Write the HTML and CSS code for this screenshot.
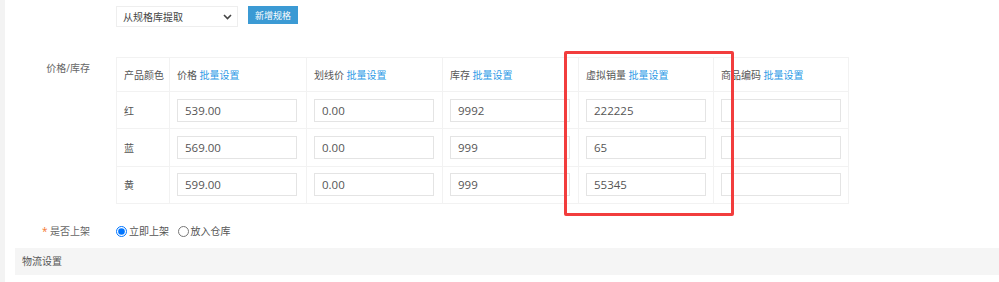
FILE: index.html
```html
<!DOCTYPE html>
<html lang="zh-CN">
<head>
  <meta charset="UTF-8">
  <title>商品规格</title>
  <link rel="stylesheet" href="styles.css">
</head>
<body>

<div class="page">
  <div class="form-row spec-row">
    <div class="label"></div>
    <div class="field">
      <div class="select-wrap">
        <select class="select">
          <option>从规格库提取</option>
        </select>
        <svg class="chevron" width="9" height="6" viewBox="0 0 9 6"><path d="M1 1l3.5 3.5L8 1" fill="none" stroke="#444" stroke-width="1.6"/></svg>
      </div>
      <button class="btn">新增规格</button>
    </div>
  </div>

  <div class="form-row stock-row">
    <div class="label">价格/库存</div>
    <div class="field table-wrap">
      <table class="sku">
        <colgroup>
          <col style="width:53px">
          <col style="width:137px">
          <col style="width:136px">
          <col style="width:136px">
          <col style="width:135px">
          <col style="width:135px">
        </colgroup>
        <tr class="head">
          <th>产品颜色</th>
          <th>价格 <a href="#">批量设置</a></th>
          <th>划线价 <a href="#">批量设置</a></th>
          <th>库存 <a href="#">批量设置</a></th>
          <th>虚拟销量 <a href="#">批量设置</a></th>
          <th>商品编码 <a href="#">批量设置</a></th>
        </tr>
        <tr>
          <td>红</td>
          <td><input type="text" value="539.00"></td>
          <td><input type="text" value="0.00"></td>
          <td><input type="text" value="9992"></td>
          <td><input type="text" value="222225"></td>
          <td><input type="text" value=""></td>
        </tr>
        <tr>
          <td>蓝</td>
          <td><input type="text" value="569.00"></td>
          <td><input type="text" value="0.00"></td>
          <td><input type="text" value="999"></td>
          <td><input type="text" value="65"></td>
          <td><input type="text" value=""></td>
        </tr>
        <tr>
          <td>黄</td>
          <td><input type="text" value="599.00"></td>
          <td><input type="text" value="0.00"></td>
          <td><input type="text" value="999"></td>
          <td><input type="text" value="55345"></td>
          <td><input type="text" value=""></td>
        </tr>
      </table>
      <div class="highlight"></div>
    </div>
  </div>

  <div class="form-row shelf-row">
    <div class="label"><span class="star">*</span> 是否上架</div>
    <div class="field radios">
      <label><input type="radio" name="shelf" checked>立即上架</label>
      <label><input type="radio" name="shelf">放入仓库</label>
    </div>
  </div>

  <div class="section-bar">物流设置</div>
</div>

</body>
</html>
```

FILE: styles.css
```css
body {
  margin: 0;
  padding: 0;
  background-color: #f3f3f3;
  font-family: "Open Sans", "Noto Sans CJK SC", sans-serif;
  font-size: 10px;
  color: #666;
}
.page {
  margin-left: 5px;
  height: 282px;
  background-color: #fff;
  overflow: hidden;
}
.form-row {
  display: flex;
}
.label {
  width: 85px;
  flex-shrink: 0;
  text-align: right;
  color: #666;
}
.field {
  margin-left: 26px;
}
.spec-row {
  padding-top: 6px;
}
.spec-row .field {
  display: flex;
  align-items: flex-start;
}
.select-wrap {
  position: relative;
}
.select {
  appearance: none;
  width: 122px;
  height: 21px;
  padding: 0 6px;
  border: 1px solid #eee;
  background: #fff;
  font-family: "Open Sans", "Noto Sans CJK SC", sans-serif;
  font-size: 10px;
  color: #444;
}
.chevron {
  position: absolute;
  right: 6px;
  top: 8px;
}
.btn {
  margin-left: 10px;
  width: 50px;
  height: 18px;
  padding: 0;
  border: none;
  background-color: #3b9ad4;
  color: #fff;
  font-family: "Noto Sans CJK SC", sans-serif;
  font-size: 9px;
}
.stock-row {
  margin-top: 30px;
}
.stock-row .label {
  padding-top: 3px;
  line-height: 17px;
}
.table-wrap {
  position: relative;
}
.sku {
  border-collapse: collapse;
  table-layout: fixed;
  width: 732px;
}
.sku th,
.sku td {
  border: 1px solid #f2f2f2;
  padding: 0 7px;
  text-align: left;
  font-weight: normal;
  color: #555;
  white-space: nowrap;
}
.sku .head th {
  height: 33px;
}
.sku td {
  height: 36.4px;
}
.sku a {
  color: #2d9ae6;
  text-decoration: none;
}
.sku input {
  box-sizing: border-box;
  width: 120px;
  height: 23px;
  padding: 0 7px;
  border: 1px solid #e4e4e4;
  font-family: "Open Sans", "Noto Sans CJK SC", sans-serif;
  font-size: 11.5px;
  color: #555;
}
.highlight {
  position: absolute;
  left: 448px;
  top: -6px;
  width: 164px;
  height: 159px;
  border: 3px solid #f23d3d;
  border-radius: 2px;
}
.shelf-row {
  margin-top: 17px;
  line-height: 20px;
}
.star {
  color: #f5762e;
}
.radios label {
  margin-right: 6px;
  color: #555;
}
.radios input {
  margin: 0 2px 0 0;
  width: 11px;
  height: 11px;
  vertical-align: -2px;
}
.section-bar {
  margin: 7px 0 0 10px;
  height: 27px;
  line-height: 27px;
  padding-left: 7px;
  background-color: #f5f5f5;
  color: #555;
}
```
